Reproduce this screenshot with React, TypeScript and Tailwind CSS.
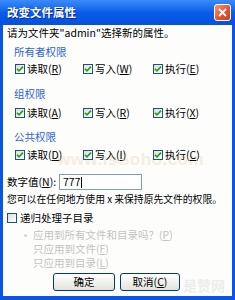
import React from "react";

const font = { fontFamily: '"Noto Sans CJK SC", "Noto Sans", sans-serif' };

function Check({ checked }: { checked: boolean }) {
  return (
    <span className="flex h-[10px] w-[10px] shrink-0 items-center justify-center border border-[#1c5180] bg-gradient-to-br from-[#dcdcd7] to-white">
      {checked && (
        <svg width="8" height="8" viewBox="0 0 8 8" aria-hidden="true">
          <path d="M1 3.8 3 5.8 7 1.6" fill="none" stroke="#21a121" strokeWidth="1.7" />
        </svg>
      )}
    </span>
  );
}

function CheckItem({ label, hot, width }: { label: string; hot: string; width: string }) {
  return (
    <div className={`flex items-center gap-[2px] ${width}`}>
      <Check checked />
      <span>
        {label}(<span className="underline">{hot}</span>)
      </span>
    </div>
  );
}

export default function App() {
  const rows: { title: string; items: [string, string][]; hmt: string; rmt: string }[] = [
    { title: "所有者权限", items: [["读取", "R"], ["写入", "W"], ["执行", "E"]], hmt: "mt-[3px]", rmt: "mt-[1px]" },
    { title: "组权限", items: [["读取", "A"], ["写入", "R"], ["执行", "X"]], hmt: "mt-[9px]", rmt: "mt-[3px]" },
    { title: "公共权限", items: [["读取", "D"], ["写入", "I"], ["执行", "C"]], hmt: "mt-[8px]", rmt: "mt-[2px]" },
  ];

  return (
    <div className="flex h-[300px] w-[235px] flex-col bg-[#0b55e4] text-[10.5px] leading-none text-black" style={font}>
      {/* Title bar */}
      <div className="flex h-[25px] shrink-0 items-center justify-between bg-gradient-to-b from-[#3b8cf7] via-[#0a5ce8] to-[#0650dc] pl-[7px] pr-[4px]">
        <span className="text-[11.5px] font-bold text-white [text-shadow:1px_1px_0_#0a2a8a]">改变文件属性</span>
        <span className="mb-[1px] flex h-[17px] w-[17px] items-center justify-center rounded-[3px] border border-white bg-gradient-to-br from-[#f39a7e] via-[#e2593a] to-[#c8401f]">
          <svg width="9" height="9" viewBox="0 0 9 9" aria-hidden="true">
            <path d="M1 1 8 8M8 1 1 8" stroke="white" strokeWidth="1.8" />
          </svg>
        </span>
      </div>

      {/* Body */}
      <div className="relative isolate mx-[3px] mb-[4px] flex flex-1 flex-col bg-[#fdfdfc]">
        {/* watermarks, painted under the content */}
        <span
          className="pointer-events-none absolute left-[54px] top-[126px] -z-10 text-[17px] font-bold tracking-[0.5px] text-[#f5ede0]"
          style={{ fontFamily: '"Liberation Sans", sans-serif' }}
        >
          www.isSoho.com
        </span>
        <span className="pointer-events-none absolute left-[180px] top-[253px] -z-10 text-[14px] font-bold text-[#ededed]">是赞网</span>

        <div className="flex h-[16px] items-center pl-[4px]">请为文件夹"admin"选择新的属性。</div>

        {rows.map((r) => (
          <React.Fragment key={r.title}>
            <div className={`flex h-[16px] items-center pl-[11px] text-[#2f64d6] ${r.hmt}`}>{r.title}</div>
            <div className={`flex h-[16px] items-center pl-[12px] ${r.rmt}`}>
              <CheckItem label={r.items[0][0]} hot={r.items[0][1]} width="w-[68px]" />
              <CheckItem label={r.items[1][0]} hot={r.items[1][1]} width="w-[70px]" />
              <CheckItem label={r.items[2][0]} hot={r.items[2][1]} width="w-[60px]" />
            </div>
          </React.Fragment>
        ))}

        <div className="mt-[11px] flex h-[16px] items-center pl-[4px]">
          <span className="w-[52px]">
            数字值(<span className="underline">N</span>):
          </span>
          <div className="flex h-[16px] w-[83px] items-center border border-[#7f9db9] bg-white pl-[3px]">
            777<span className="ml-[1px] h-[11px] w-px bg-black" />
          </div>
        </div>

        <div className="mt-[2px] flex h-[16px] items-center whitespace-nowrap pl-[4px] text-[9.8px]">
          您可以在任何地方使用 x 来保持原先文件的权限。
        </div>

        <div className="mt-[2px] flex h-[16px] items-center gap-[3px] pl-[4px]">
          <Check checked={false} />
          <span>递归处理子目录</span>
        </div>

        <div className="mt-[2px] flex flex-col text-[#c4c4bd]">
          <div className="flex h-[14px] items-center pl-[21px]">
            <span className="mr-[6px] h-[3px] w-[3px] rounded-full bg-[#d8d8d2]" />
            应用到所有文件和目录吗？(<span className="underline">P</span>)
          </div>
          <div className="flex h-[14px] items-center pl-[30px]">
            只应用到文件(<span className="underline">F</span>)
          </div>
          <div className="flex h-[14px] items-center pl-[30px]">
            只应用到目录(<span className="underline">L</span>)
          </div>
        </div>

        <div className="mt-[3px] flex h-[18px] items-center gap-[5px] pl-[50px]">
          <button className="flex h-[18px] w-[62px] items-center justify-center rounded-[3px] border border-[#003c74] bg-gradient-to-b from-white to-[#e3e3dd] text-[10.5px]">
            确定
          </button>
          <button className="flex h-[18px] w-[60px] items-center justify-center rounded-[3px] border border-[#003c74] bg-gradient-to-b from-white to-[#e3e3dd] text-[10.5px]">
            取消(<span className="underline">C</span>)
          </button>
        </div>
      </div>
    </div>
  );
}
